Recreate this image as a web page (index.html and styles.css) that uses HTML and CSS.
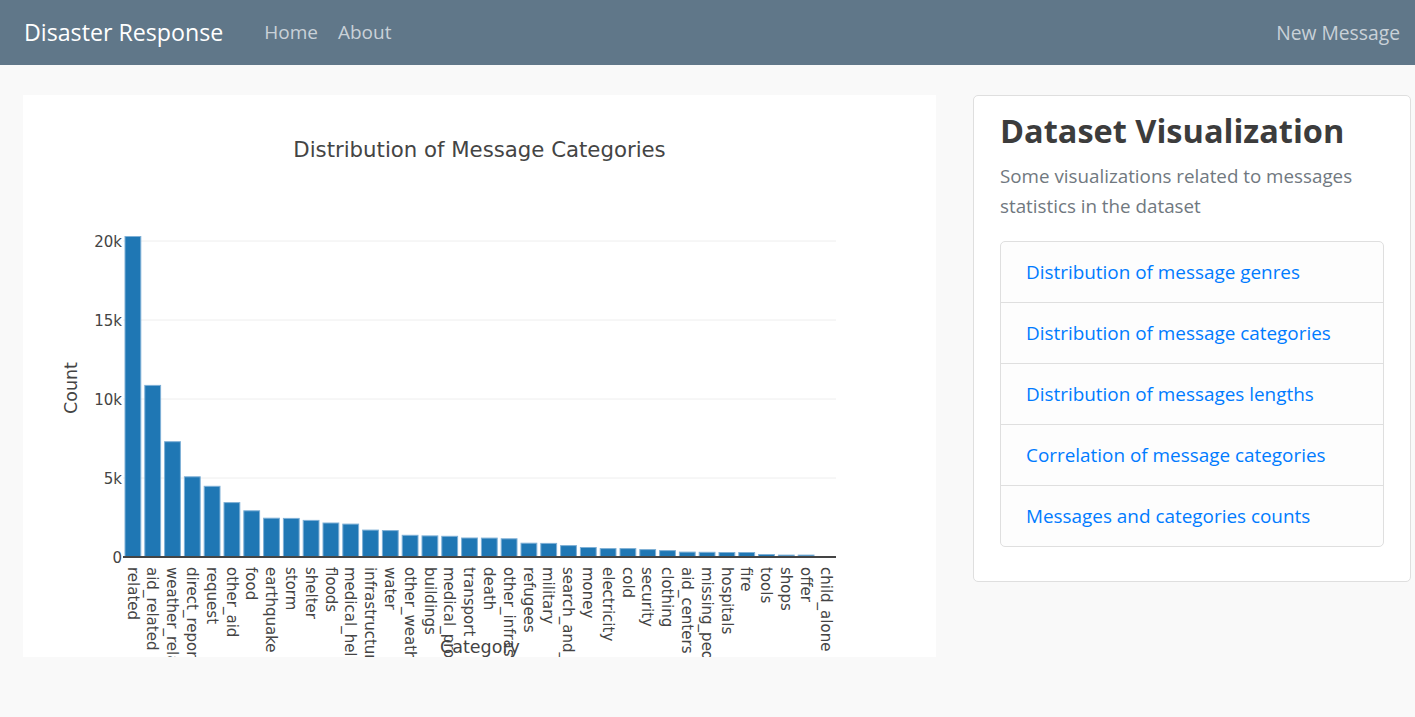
FILE: index.html
```html
<!DOCTYPE html>
<html lang="en">
<head>
<meta charset="utf-8">
<title>Disaster Response</title>
<link rel="stylesheet" href="styles.css">
</head>
<body>
<nav class="navbar">
  <a class="brand" href="#">Disaster Response</a>
  <ul class="nav">
    <li><a class="nav-link" href="#">Home</a></li>
    <li><a class="nav-link" href="#">About</a></li>
  </ul>
  <a class="nav-link nav-right" href="#">New Message</a>
</nav>
<main class="main">
  <section class="chart-card">
    <svg class="chart" width="913" height="562" viewBox="0 0 913 562">
      <text class="title" x="456.5" y="62" text-anchor="middle">Distribution of Message Categories</text>
      <g class="grid">
        <line x1="100" x2="813" y1="146" y2="146"/>
        <line x1="100" x2="813" y1="225" y2="225"/>
        <line x1="100" x2="813" y1="304" y2="304"/>
        <line x1="100" x2="813" y1="383" y2="383"/>
      </g>
      <g class="yticks" text-anchor="end">
        <text x="99" y="151.5">20k</text>
        <text x="99" y="230.5">15k</text>
        <text x="99" y="309.5">10k</text>
        <text x="99" y="388.5">5k</text>
        <text x="99" y="467.5">0</text>
      </g>
      <text class="axis-title" transform="translate(54,293) rotate(-90)" text-anchor="middle">Count</text>
      <g class="bars">
        <rect x="102.0" y="141.5" width="15.8" height="320.5"/>
        <rect x="121.8" y="290.4" width="15.8" height="171.6"/>
        <rect x="141.6" y="346.7" width="15.8" height="115.3"/>
        <rect x="161.4" y="381.8" width="15.8" height="80.2"/>
        <rect x="181.2" y="391.3" width="15.8" height="70.7"/>
        <rect x="201.0" y="407.6" width="15.8" height="54.4"/>
        <rect x="220.8" y="415.8" width="15.8" height="46.2"/>
        <rect x="240.6" y="423.2" width="15.8" height="38.8"/>
        <rect x="260.4" y="423.4" width="15.8" height="38.6"/>
        <rect x="280.2" y="425.4" width="15.8" height="36.6"/>
        <rect x="300.0" y="428.0" width="15.8" height="34.0"/>
        <rect x="319.8" y="429.1" width="15.8" height="32.9"/>
        <rect x="339.6" y="435.1" width="15.8" height="26.9"/>
        <rect x="359.4" y="435.6" width="15.8" height="26.4"/>
        <rect x="379.2" y="440.3" width="15.8" height="21.7"/>
        <rect x="399.0" y="440.9" width="15.8" height="21.1"/>
        <rect x="418.8" y="441.3" width="15.8" height="20.7"/>
        <rect x="438.6" y="443.0" width="15.8" height="19.0"/>
        <rect x="458.4" y="443.1" width="15.8" height="18.9"/>
        <rect x="478.2" y="443.8" width="15.8" height="18.2"/>
        <rect x="498.0" y="448.2" width="15.8" height="13.8"/>
        <rect x="517.8" y="448.4" width="15.8" height="13.6"/>
        <rect x="537.6" y="450.6" width="15.8" height="11.4"/>
        <rect x="557.4" y="452.5" width="15.8" height="9.5"/>
        <rect x="577.2" y="453.6" width="15.8" height="8.4"/>
        <rect x="597.0" y="453.6" width="15.8" height="8.4"/>
        <rect x="616.8" y="454.6" width="15.8" height="7.4"/>
        <rect x="636.6" y="455.6" width="15.8" height="6.4"/>
        <rect x="656.4" y="457.1" width="15.8" height="4.9"/>
        <rect x="676.2" y="457.3" width="15.8" height="4.7"/>
        <rect x="696.0" y="457.5" width="15.8" height="4.5"/>
        <rect x="715.8" y="457.5" width="15.8" height="4.5"/>
        <rect x="735.6" y="459.5" width="15.8" height="2.5"/>
        <rect x="755.4" y="460.1" width="15.8" height="1.9"/>
        <rect x="775.2" y="460.1" width="15.8" height="1.9"/>
      </g>
      <line class="zeroline" x1="100" x2="813" y1="462" y2="462"/>
      <g class="xticks">
        <text transform="translate(109.9,472) rotate(90)" dy="0.35em">related</text>
        <text transform="translate(129.7,472) rotate(90)" dy="0.35em">aid_related</text>
        <text transform="translate(149.5,472) rotate(90)" dy="0.35em">weather_related</text>
        <text transform="translate(169.3,472) rotate(90)" dy="0.35em">direct_report</text>
        <text transform="translate(189.1,472) rotate(90)" dy="0.35em">request</text>
        <text transform="translate(208.9,472) rotate(90)" dy="0.35em">other_aid</text>
        <text transform="translate(228.7,472) rotate(90)" dy="0.35em">food</text>
        <text transform="translate(248.5,472) rotate(90)" dy="0.35em">earthquake</text>
        <text transform="translate(268.3,472) rotate(90)" dy="0.35em">storm</text>
        <text transform="translate(288.1,472) rotate(90)" dy="0.35em">shelter</text>
        <text transform="translate(307.9,472) rotate(90)" dy="0.35em">floods</text>
        <text transform="translate(327.7,472) rotate(90)" dy="0.35em">medical_help</text>
        <text transform="translate(347.5,472) rotate(90)" dy="0.35em">infrastructure_related</text>
        <text transform="translate(367.3,472) rotate(90)" dy="0.35em">water</text>
        <text transform="translate(387.1,472) rotate(90)" dy="0.35em">other_weather</text>
        <text transform="translate(406.9,472) rotate(90)" dy="0.35em">buildings</text>
        <text transform="translate(426.7,472) rotate(90)" dy="0.35em">medical_products</text>
        <text transform="translate(446.5,472) rotate(90)" dy="0.35em">transport</text>
        <text transform="translate(466.3,472) rotate(90)" dy="0.35em">death</text>
        <text transform="translate(486.1,472) rotate(90)" dy="0.35em">other_infrastructure</text>
        <text transform="translate(505.9,472) rotate(90)" dy="0.35em">refugees</text>
        <text transform="translate(525.7,472) rotate(90)" dy="0.35em">military</text>
        <text transform="translate(545.5,472) rotate(90)" dy="0.35em">search_and_rescue</text>
        <text transform="translate(565.3,472) rotate(90)" dy="0.35em">money</text>
        <text transform="translate(585.1,472) rotate(90)" dy="0.35em">electricity</text>
        <text transform="translate(604.9,472) rotate(90)" dy="0.35em">cold</text>
        <text transform="translate(624.7,472) rotate(90)" dy="0.35em">security</text>
        <text transform="translate(644.5,472) rotate(90)" dy="0.35em">clothing</text>
        <text transform="translate(664.3,472) rotate(90)" dy="0.35em">aid_centers</text>
        <text transform="translate(684.1,472) rotate(90)" dy="0.35em">missing_people</text>
        <text transform="translate(703.9,472) rotate(90)" dy="0.35em">hospitals</text>
        <text transform="translate(723.7,472) rotate(90)" dy="0.35em">fire</text>
        <text transform="translate(743.5,472) rotate(90)" dy="0.35em">tools</text>
        <text transform="translate(763.3,472) rotate(90)" dy="0.35em">shops</text>
        <text transform="translate(783.1,472) rotate(90)" dy="0.35em">offer</text>
        <text transform="translate(802.9,472) rotate(90)" dy="0.35em">child_alone</text>
      </g>
      <text class="axis-title" x="457" y="558" text-anchor="middle">Category</text>
    </svg>
  </section>
  <aside class="side-card">
    <h1 class="side-title">Dataset Visualization</h1>
    <p class="lead">Some visualizations related to messages statistics in the dataset</p>
    <ul class="list-group">
      <li class="list-item"><a href="#">Distribution of message genres</a></li>
      <li class="list-item"><a href="#">Distribution of message categories</a></li>
      <li class="list-item"><a href="#">Distribution of messages lengths</a></li>
      <li class="list-item"><a href="#">Correlation of message categories</a></li>
      <li class="list-item"><a href="#">Messages and categories counts</a></li>
    </ul>
  </aside>
</main>
</body>
</html>
```

FILE: styles.css
```css
* { box-sizing: border-box; }

body {
  margin: 0;
  background: #f9f9f9;
  font-family: "Open Sans", "Noto Sans", sans-serif;
  color: #212529;
}

a { text-decoration: none; }

.navbar {
  height: 65px;
  background: #607789;
  display: flex;
  align-items: center;
  padding: 0 15px 0 24px;
}

.brand {
  color: #fff;
  font-size: 23.2px;
  margin-right: 31px;
  line-height: 1;
}

.nav {
  list-style: none;
  margin: 0;
  padding: 0;
  display: flex;
}

.nav-link {
  display: block;
  color: #c9d1d8;
  font-size: 19px;
  padding: 0 10px;
  line-height: 1;
}

.nav-right {
  margin-left: auto;
  padding-right: 0;
  font-size: 19.3px;
}

.main {
  display: flex;
  align-items: flex-start;
  gap: 37px;
  padding: 30px 4px 0 23px;
}

.chart-card {
  width: 913px;
  height: 562px;
  background: #fff;
  flex: none;
}

.chart {
  display: block;
  font-family: "DejaVu Sans", Verdana, sans-serif;
  fill: #444;
}

.chart .title { font-size: 21.25px; }
.chart .axis-title { font-size: 17.5px; }
.chart .yticks text,
.chart .xticks text { font-size: 15px; }

.grid line { stroke: #eeeeee; stroke-width: 1; }

.bars rect {
  fill: #1f77b4;
  stroke: #7eb0d6;
  stroke-width: 1;
}

.zeroline { stroke: #444; stroke-width: 2; }

.side-card {
  width: 438px;
  flex: none;
  background: #fff;
  border: 1px solid #dfdfdf;
  border-radius: 5px;
  padding: 15px 26px 34px;
}

.side-title {
  margin: 0;
  font-size: 32.5px;
  font-weight: 700;
  color: #3c3c3c;
  line-height: 1.2;
}

.lead {
  margin: 11px 0 20px;
  font-size: 18.8px;
  line-height: 30px;
  color: #707880;
}

.list-group {
  list-style: none;
  margin: 0;
  padding: 0;
  border: 1px solid #dfdfdf;
  border-radius: 5px;
  background: #fdfdfd;
}

.list-item {
  height: 61px;
  display: flex;
  align-items: center;
  padding: 0 25px;
  border-top: 1px solid #dfdfdf;
}

.list-item:first-child { border-top: none; height: 60px; }

.list-item a {
  color: #007bff;
  font-size: 18.9px;
}
```
